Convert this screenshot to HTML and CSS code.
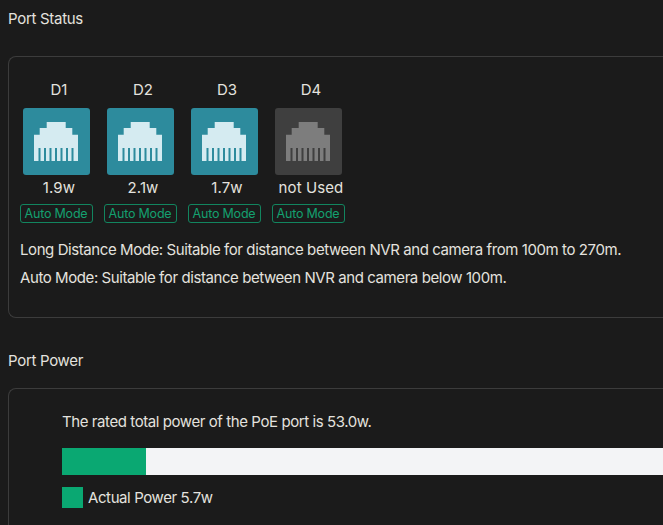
FILE: index.html
```html
<!DOCTYPE html>
<html lang="en">
<head>
<meta charset="utf-8">
<title>Port Status</title>
<link rel="stylesheet" href="styles.css">
</head>
<body>
<svg class="defs" width="0" height="0" aria-hidden="true">
  <symbol id="rj45" viewBox="0 0 44 39">
    <path class="plug" d="M12.7 0h19v6h6.6v6.7H44V39H0V12.7h5.7V6h7z"/>
    <path class="slots" d="M4.5 26h2v13h-2zM10 26h2v13h-2zM15.5 26h2v13h-2zM21 26h2v13h-2zM26.5 26h2v13h-2zM32 26h2v13h-2zM37.5 26h2v13h-2z"/>
  </symbol>
</svg>
<main class="page">
  <h2 class="title">Port Status</h2>
  <section class="card status-card">
    <div class="ports">
      <div class="port">
        <div class="port-name">D1</div>
        <div class="port-box active"><svg class="rj"><use href="#rj45"/></svg></div>
        <div class="port-power">1.9w</div>
        <div class="mode">Auto Mode</div>
      </div>
      <div class="port">
        <div class="port-name">D2</div>
        <div class="port-box active"><svg class="rj"><use href="#rj45"/></svg></div>
        <div class="port-power">2.1w</div>
        <div class="mode">Auto Mode</div>
      </div>
      <div class="port">
        <div class="port-name">D3</div>
        <div class="port-box active"><svg class="rj"><use href="#rj45"/></svg></div>
        <div class="port-power">1.7w</div>
        <div class="mode">Auto Mode</div>
      </div>
      <div class="port">
        <div class="port-name">D4</div>
        <div class="port-box unused"><svg class="rj"><use href="#rj45"/></svg></div>
        <div class="port-power">not Used</div>
        <div class="mode">Auto Mode</div>
      </div>
    </div>
    <p class="note">Long Distance Mode: Suitable for distance between NVR and camera from 100m to 270m.</p>
    <p class="note">Auto Mode: Suitable for distance between NVR and camera below 100m.</p>
  </section>
  <h2 class="title power-title">Port Power</h2>
  <section class="card power-card">
    <p class="rated">The rated total power of the PoE port is 53.0w.</p>
    <div class="bar"><div class="bar-fill"></div></div>
    <div class="legend"><span class="swatch"></span><span>Actual Power 5.7w</span></div>
  </section>
</main>
</body>
</html>
```
FILE: styles.css
```css
* { box-sizing: border-box; }
html, body { margin: 0; height: 100%; overflow: hidden; }
body {
  background: #1b1b1b;
  color: #e4e2df;
  font-family: Inter, "Noto Sans", sans-serif;
  font-size: 15px;
}
.defs { position: absolute; }
.page { padding: 9px 0 0 8px; width: 663px; height: 525px; overflow: hidden; }
.title {
  margin: 0;
  font-size: 15px;
  font-weight: 400;
  line-height: 20px;
  letter-spacing: -0.3px;
}
.card {
  border: 1px solid #3c3c3c;
  border-right: 0;
  border-radius: 8px 0 0 8px;
  background: #1b1b1b;
}
.status-card {
  margin-top: 27px;
  height: 262px;
  padding: 23px 0 0 7px;
}
.ports { display: flex; gap: 4px; margin-bottom: 17px; }
.port {
  width: 80px;
  display: flex;
  flex-direction: column;
  align-items: center;
}
.port-name { font-size: 15px; line-height: 20px; margin-bottom: 8px; padding-left: 6px; }
.port-box {
  width: 67px;
  height: 67px;
  border-radius: 3px;
  display: flex;
  align-items: flex-start;
  justify-content: center;
  padding-top: 14px;
}
.active { background: #2d8b9d; color: #d5ebf1; --slot: #2d8b9d; }
.unused { background: #3f3f3f; color: #7d7d7d; --slot: #3f3f3f; }
.rj { width: 44px; height: 39px; display: block; }
.plug { fill: currentColor; }
.slots { fill: var(--slot); }
.port-power { font-size: 15px; line-height: 20px; margin-top: 3px; padding-left: 6px; white-space: nowrap; letter-spacing: 0.1px; }
.mode {
  margin-top: 6px;
  width: 73px;
  height: 19px;
  border: 1px solid #12855f;
  border-radius: 3px;
  color: #14a070;
  font-size: 12.5px;
  line-height: 17px;
  text-align: center;
  letter-spacing: -0.2px;
  white-space: nowrap;
}
.note {
  margin: 0 0 8px;
  padding-left: 4px;
  font-size: 15px;
  line-height: 20px;
  letter-spacing: -0.42px;
  white-space: nowrap;
}
.power-title { margin-top: 33px; }
.power-card {
  margin-top: 17px;
  height: 200px;
  padding: 23px 0 0 53px;
}
.rated { margin: 0 0 16px; line-height: 20px; letter-spacing: -0.42px; }
.bar { height: 27px; background: #f3f4f6; }
.bar-fill { width: 84px; height: 100%; background: #0aa872; }
.legend {
  margin-top: 12px;
  display: flex;
  align-items: center;
  gap: 5px;
  line-height: 21px;
  letter-spacing: -0.4px;
}
.swatch { width: 21px; height: 21px; background: #0aa872; }
```
